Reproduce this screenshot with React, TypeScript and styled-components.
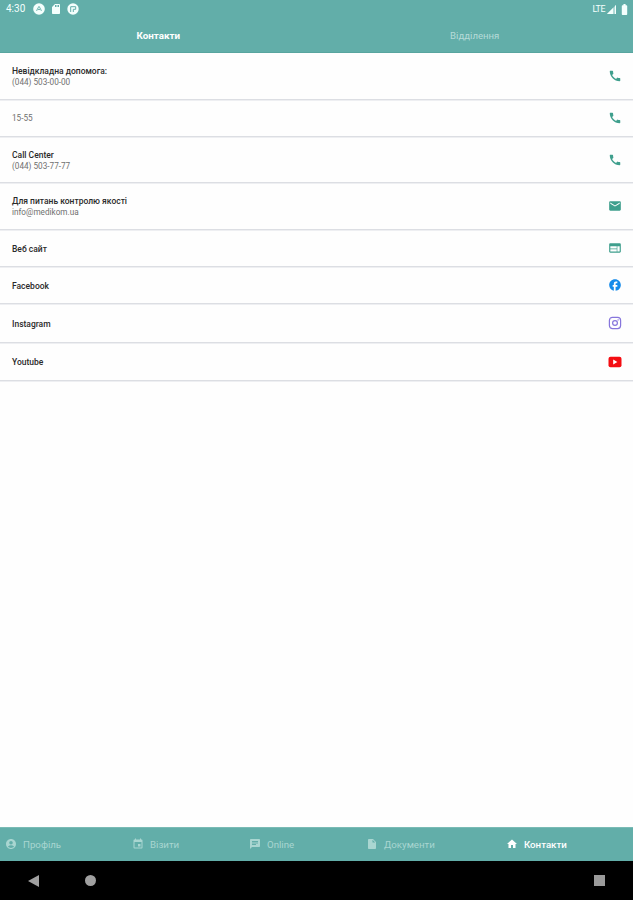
import React from 'react';
import styled, { createGlobalStyle } from 'styled-components';
import type { IconType } from 'react-icons';
import {
  MdCall, MdEmail, MdWeb, MdFacebook, MdAccountCircle, MdEvent,
  MdChat, MdInsertDriveFile, MdHome, MdSdCard, MdBatteryFull,
} from 'react-icons/md';

const TEAL = '#62aea9';

const GlobalStyle = createGlobalStyle`
  * { box-sizing: border-box; }
  body { margin: 0; background: #fff; font-family: Roboto, "Liberation Sans", sans-serif; }
`;

const Screen = styled.div`
  width: 633px;
  height: 900px;
  display: flex;
  flex-direction: column;
  overflow: hidden;
  background: #fefefe;
`;

const StatusBar = styled.div`
  height: 18px;
  flex: none;
  display: flex;
  align-items: center;
  padding: 0 2px 0 6px;
  color: #f4fffd;
  background: ${TEAL};
  font-size: 10px;
  svg { display: block; flex: none; }
`;

const Clock = styled.span`
  width: 27px;
  line-height: 18px;
`;

const StatusIcons = styled.div`
  display: flex;
  align-items: center;
  gap: 5px;
`;

const Network = styled.div`
  display: flex;
  align-items: center;
  gap: 1px;
  margin-left: auto;
  font-size: 8.8px;
  letter-spacing: -0.4px;
`;

const Tabs = styled.div`
  height: 35px;
  flex: none;
  display: grid;
  grid-template-columns: 1fr 1fr;
  background: ${TEAL};
  border-bottom: 1px solid #58a59f;
`;

const Tab = styled.div<{ $active?: boolean }>`
  text-align: center;
  line-height: 36px;
  font-size: ${p => (p.$active ? 9.8 : 9.6)}px;
  font-weight: ${p => (p.$active ? 700 : 400)};
  color: ${p => (p.$active ? '#fff' : '#b5dbd8')};
`;

const Row = styled.div<{ $h: number }>`
  height: ${p => p.$h}px;
  flex: none;
  display: flex;
  align-items: center;
  justify-content: space-between;
  padding: 1px 11px 0 12px;
  border-bottom: 1px solid #dcdee3;
  box-shadow: 0 1px 0 #eeeff2;
  svg { display: block; margin-bottom: 1px; }
`;

const Label = styled.div`
  font-size: 8.5px;
  line-height: 12px;
  font-weight: 500;
  color: #2a2a2a;
`;

const Value = styled.div`
  font-size: 8.2px;
  line-height: 11px;
  color: #707070;
`;

const Spacer = styled.div`
  flex: 1;
`;

const BottomNav = styled.div`
  height: 34px;
  flex: none;
  display: grid;
  grid-template-columns: 127px 117px 117px 140px 1fr;
  align-items: center;
  padding: 0 0 1px 5px;
  background: ${TEAL};
  border-top: 1px solid #7abbb5;
`;

const NavItem = styled.div<{ $active?: boolean }>`
  display: flex;
  align-items: center;
  gap: 6px;
  font-size: 9.7px;
  font-weight: ${p => (p.$active ? 500 : 400)};
  color: ${p => (p.$active ? '#fff' : '#a9d6d1')};
  white-space: nowrap;
  svg { display: block; }
`;

const SystemBar = styled.div`
  height: 39px;
  flex: none;
  display: flex;
  align-items: center;
  padding: 0 28px 0 28px;
  background: #000;
  svg { display: block; }
`;

const HomeButton = styled.span`
  width: 11px;
  height: 11px;
  margin-left: 46px;
  border-radius: 50%;
  background: #a0a0a0;
`;

const RecentsButton = styled.span`
  width: 11px;
  height: 11px;
  margin-left: auto;
  background: #9a9a9a;
`;

const YoutubeIcon = () => (
  <svg width="14" height="12" viewBox="0 0 14 12">
    <rect x="0.5" y="0.7" width="13" height="10.6" rx="2" fill="#f40d12" />
    <path d="M5.2 3.5v5l4.2-2.5z" fill="#fff" />
  </svg>
);

const InstagramIcon = () => (
  <svg width="14" height="14" viewBox="0 0 14 14" fill="none" stroke="#8776dc">
    <rect x="1.4" y="1.4" width="11.2" height="11.2" rx="3" strokeWidth="1.2" />
    <circle cx="7" cy="7" r="2.4" strokeWidth="1.2" />
    <circle cx="10.1" cy="3.9" r="0.7" fill="#8776dc" stroke="none" />
  </svg>
);

interface Contact {
  h: number;
  label?: string;
  value?: string;
  icon: IconType | React.FC;
  color?: string;
}

const contacts: Contact[] = [
  { h: 47, label: 'Невідкладна допомога:', value: '(044) 503-00-00', icon: MdCall },
  { h: 37, value: '15-55', icon: MdCall },
  { h: 46, label: 'Call Center', value: '(044) 503-77-77', icon: MdCall },
  { h: 47, label: 'Для питань контролю якості', value: 'info@medikom.ua', icon: MdEmail },
  { h: 37, label: 'Веб сайт', icon: MdWeb },
  { h: 37, label: 'Facebook', icon: MdFacebook, color: '#168bea' },
  { h: 39, label: 'Instagram', icon: InstagramIcon },
  { h: 38, label: 'Youtube', icon: YoutubeIcon },
];

const navItems: { label: string; icon: IconType; active?: boolean }[] = [
  { label: 'Профіль', icon: MdAccountCircle },
  { label: 'Візити', icon: MdEvent },
  { label: 'Online', icon: MdChat },
  { label: 'Документи', icon: MdInsertDriveFile },
  { label: 'Контакти', icon: MdHome, active: true },
];

export default function App() {
  return (
    <Screen>
      <GlobalStyle />
      <StatusBar>
        <Clock>4:30</Clock>
        <StatusIcons>
          <svg width="12" height="12" viewBox="0 0 12 12">
            <circle cx="6" cy="6" r="5.8" fill="currentColor" />
            <path d="M3.5 7.8 5.8 3.5h.4l2.3 4.3M4.9 7.2 6 5.9l1.1 1.3" fill="none" stroke={TEAL} strokeWidth="0.9" />
          </svg>
          <MdSdCard size={12} />
          <svg width="12" height="12" viewBox="0 0 12 12">
            <circle cx="6" cy="6" r="5.7" fill="currentColor" />
            <path d="M3.7 9V3.7h5v2.6H6.3V9" fill="none" stroke={TEAL} strokeWidth="1" />
          </svg>
        </StatusIcons>
        <Network>
          LTE
          <svg width="11" height="11" viewBox="0 0 11 11">
            <path d="M1 10 10 1v9z" fill="currentColor" opacity="0.55" />
            <path d="M1 10 7 4v6z" fill="currentColor" />
            <path d="M9 2v8h1V1z" fill="currentColor" />
          </svg>
          <MdBatteryFull size={13} />
        </Network>
      </StatusBar>
      <Tabs>
        <Tab $active>Контакти</Tab>
        <Tab>Відділення</Tab>
      </Tabs>
      {contacts.map(({ h, label, value, icon: Icon, color = '#3f9f8d' }, i) => (
        <Row key={i} $h={h}>
          <div>
            {label && <Label>{label}</Label>}
            {value && <Value>{value}</Value>}
          </div>
          <Icon size={14} color={color} />
        </Row>
      ))}
      <Spacer />
      <BottomNav>
        {navItems.map(({ label, icon: Icon, active }) => (
          <NavItem key={label} $active={active}>
            <Icon size={12} />
            {label}
          </NavItem>
        ))}
      </BottomNav>
      <SystemBar>
        <svg width="11" height="12" viewBox="0 0 11 12">
          <path d="M0 6 11 0v12z" fill="#a0a0a0" />
        </svg>
        <HomeButton />
        <RecentsButton />
      </SystemBar>
    </Screen>
  );
}
